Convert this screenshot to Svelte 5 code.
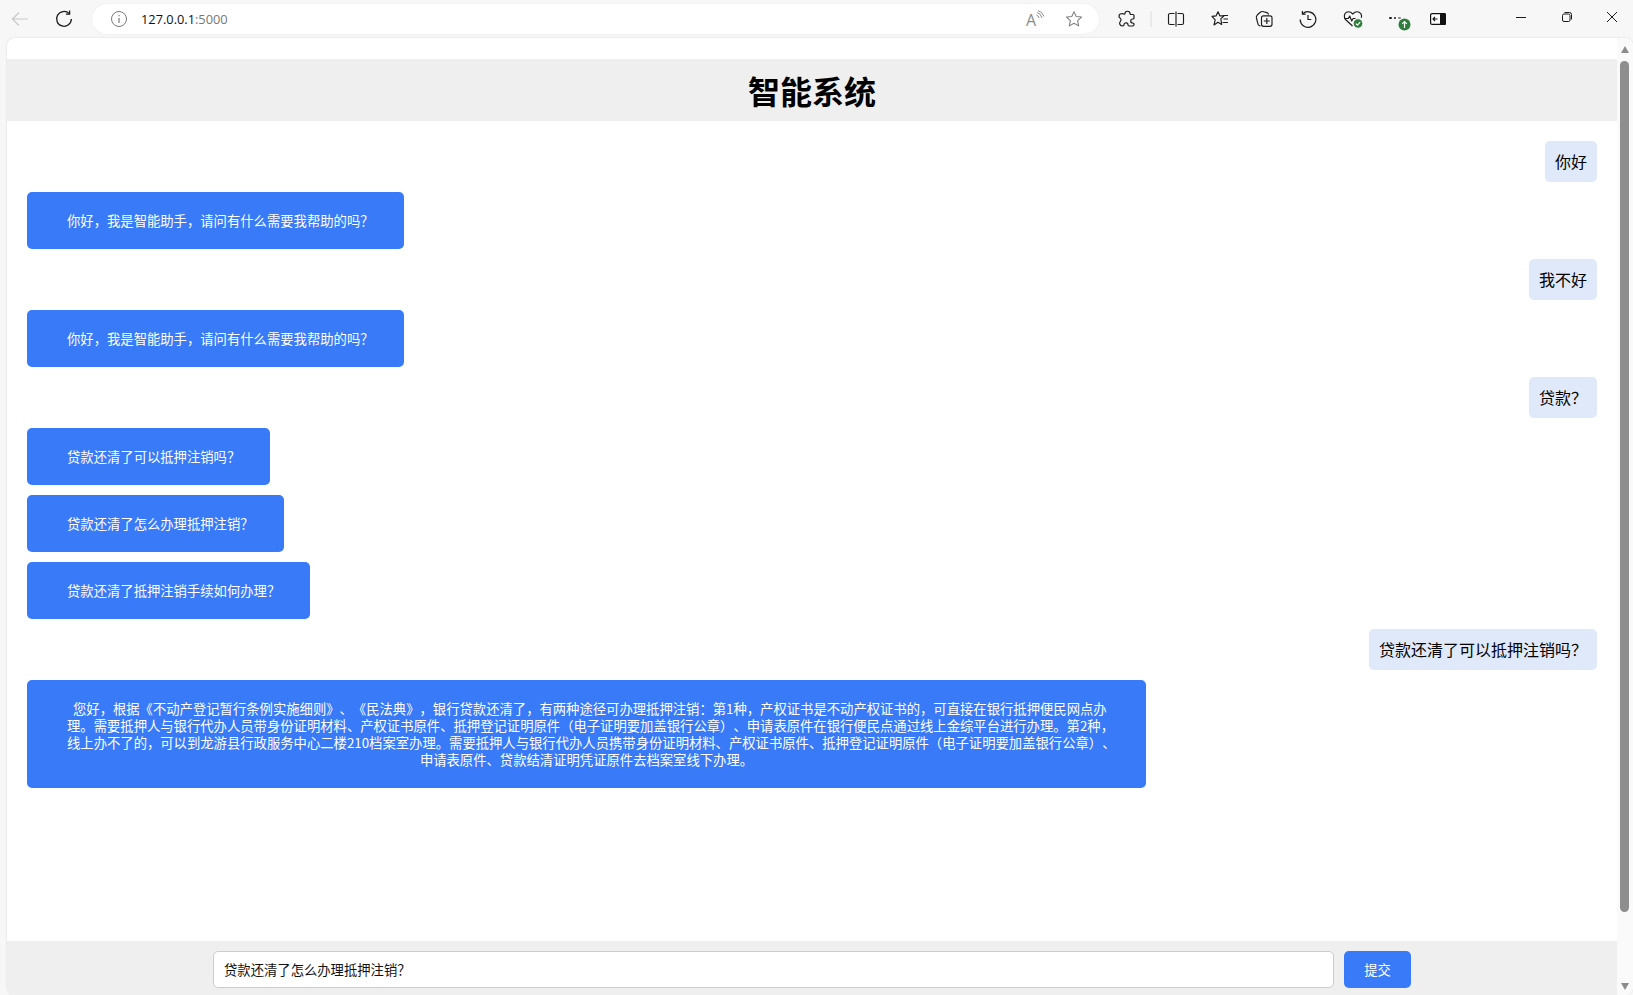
<script>
  const C = '\uff0c';
  const Q = '\uff1f';
  const L = '\uff08';
  const R = '\uff09';
  const M = '\uff1a';
  const greeting = `你好${C}我是智能助手${C}请问有什么需要我帮助的吗${Q}`;
  const typed = `贷款还清了怎么办理抵押注销${Q}`;
  const messages = [
    { from: 'user', lines: ['你好'] },
    { from: 'bot', lines: [greeting] },
    { from: 'user', lines: ['我不好'] },
    { from: 'bot', lines: [greeting] },
    { from: 'user', lines: [`贷款${Q}`] },
    { from: 'bot', lines: [`贷款还清了可以抵押注销吗${Q}`] },
    { from: 'bot', lines: [typed] },
    { from: 'bot', lines: [`贷款还清了抵押注销手续如何办理${Q}`] },
    { from: 'user', lines: [`贷款还清了可以抵押注销吗${Q}`] },
    {
      from: 'bot',
      wide: true,
      lines: [
        `\u00a0\u00a0您好${C}根据《不动产登记暂行条例实施细则》、《民法典》${C}银行贷款还清了${C}有两种途径可办理抵押注销${M}第1种${C}产权证书是不动产权证书的${C}可直接在银行抵押便民网点办`,
        `理。需要抵押人与银行代办人员带身份证明材料、产权证书原件、抵押登记证明原件${L}电子证明要加盖银行公章${R}、申请表原件在银行便民点通过线上金综平台进行办理。第2种${C}`,
        `线上办不了的${C}可以到龙游县行政服务中心二楼210档案室办理。需要抵押人与银行代办人员携带身份证明材料、产权证书原件、抵押登记证明原件${L}电子证明要加盖银行公章${R}、`,
        '申请表原件、贷款结清证明凭证原件去档案室线下办理。'
      ]
    }
  ];
</script>

<div class="window">
  <div class="toolbar">
    <div class="ic back">
      <svg width="20" height="20" viewBox="0 0 20 20" fill="none" stroke="#c9c9c9" stroke-width="1.2"><path d="M18 10H2.500M9 3.500 2.500 10 9 16.500"/></svg>
    </div>
    <div class="ic reload">
      <svg width="20" height="20" viewBox="0 0 20 20" fill="none" stroke="#1c1c1c" stroke-width="1.3"><path d="M15.200 4.600A7.400 7.400 0 1 0 17.400 10"/><path d="M15.600 1.500v3.700h-3.700"/></svg>
    </div>
    <div class="pill">
      <svg class="info" width="18" height="18" viewBox="0 0 18 18" fill="none" stroke="#7a7a7a" stroke-width="1"><circle cx="9" cy="9" r="7.500"/><path d="M9 8v5M9 5v1.300" stroke-width="1.200"/></svg>
      <span class="url">127.0.0.1<span class="port">:5000</span></span>
      <span class="pill-space"></span>
      <span class="read"><span class="read-a">A</span><svg width="9" height="11" viewBox="0 0 9 11" fill="none" stroke="#8c8c8c" stroke-width="1"><path d="M.5 5q2 .6 2.500 3M1 2.500q4 1 5 5.500M2 .5q4.500 1.500 6 6"/></svg></span>
      <svg class="fav" width="18" height="18" viewBox="0 0 18 18" fill="none" stroke="#7d7d7d" stroke-width="1.050" stroke-linejoin="round"><path d="M9 1.600l2.200 4.900 5.300.6-3.900 3.600 1.100 5.200L9 13.300l-4.700 2.600 1.100-5.200-3.900-3.600 5.300-.6z"/></svg>
    </div>

    <div class="ic first">
      <svg width="18" height="18" viewBox="0 0 18 18" fill="none" stroke="#1c1c1c" stroke-width="1.200" stroke-linejoin="round"><path d="M7 3.500c0-3 5-3 5 0 0 .7 0 1 .8 1H15c.8 0 1 .5 1 1.200V8c0 .7-.6 1-1.200 1-2.800 0-2.800 4 0 4 .6 0 1.200.3 1.200 1v.5c0 .8-.4 1.500-1.200 1.500H11c-.8 0-1-.5-1-1.200 0-2.500-4-2.500-4 0 0 .7-.4 1.200-1 1.200-3 0-4-2.500-3-4 .6-.9 1-1 1-2.500 0-1.200-2-1.700-2-3.300 0-2 2-2.700 3.500-2.700C6 4.500 7 4.300 7 3.500z"/></svg>
    </div>
    <div class="sep"></div>
    <div class="ic">
      <svg width="18" height="18" viewBox="0 0 18 18" fill="none" stroke="#1c1c1c" stroke-width="1.150"><path d="M7.500 3.500H3A1.500 1.500 0 0 0 1.500 5v8A1.500 1.500 0 0 0 3 14.500h4.500M10.500 3.500H15A1.500 1.500 0 0 1 16.500 5v8a1.500 1.500 0 0 1-1.500 1.500h-4.500M9 1.500v15"/></svg>
    </div>
    <div class="ic">
      <svg width="18" height="18" viewBox="0 0 18 18" fill="none" stroke="#1c1c1c" stroke-width="1.150" stroke-linejoin="round"><path d="M7 1.800l1.800 4H13l-3.200 3 .9 5.700L7 12.300l-4 2.700 1.200-5.200L1 6.400l4-.5z"/><path d="M12 5.500h5M12.500 9h4.500M11.500 12.500H17"/></svg>
    </div>
    <div class="ic">
      <svg width="18" height="18" viewBox="0 0 18 18" fill="none" stroke="#1c1c1c" stroke-width="1.150" stroke-linejoin="round"><path d="M5.500 16c-1.500 0-2-.8-2.500-1.800L1.400 8c-.3-1.300.1-2.200 1-3.200L5 2.500C6 1.500 7 1.300 8.500 1.700l3.500.9c.9.3 1.400.8 1.500 2"/><rect x="6.500" y="5.800" width="10.500" height="10.500" rx="2"/><path d="M11.800 8v6M8.800 11h6"/></svg>
    </div>
    <div class="ic">
      <svg width="18" height="18" viewBox="0 0 18 18" fill="none" stroke="#1c1c1c" stroke-width="1.200"><path d="M3.600 3.900A7.800 7.800 0 1 1 1.200 9.500"/><path d="M3.400.9v3.300h3.300M9 5v4.500h3.300"/></svg>
    </div>
    <div class="ic badge-host">
      <svg width="20" height="20" viewBox="0 0 20 20" fill="none" stroke="#1c1c1c" stroke-width="1.150" stroke-linejoin="round"><path d="M9.500 17 3 11C.5 8.500 1 4.500 3.500 3.300 5.500 2.300 8 3 9.800 5c1.800-2 4.300-2.700 6.300-1.700 2 1 2.900 3.300 2.100 5.500"/><path d="M1.500 9.500h3.800l1.400-2.500 2 5 1.400-2.500h2.400"/><circle cx="15" cy="14.500" r="4.700" fill="#2f7d3d" stroke="#f7f7f7" stroke-width="0.800"/><path d="M12.900 14.600l1.500 1.500 2.800-3" stroke="#fff" stroke-width="1.200"/></svg>
    </div>
    <div class="ic more">
      <span class="dot"></span><span class="dot"></span><span class="dot faded"></span>
      <svg class="up" width="13" height="13" viewBox="0 0 13 13"><circle cx="6.500" cy="6.500" r="6" fill="#2f7d3d"/><path d="M6.500 10V3.500M4.200 5.800l2.300-2.300 2.300 2.300" fill="none" stroke="#fff" stroke-width="1.200"/></svg>
    </div>
    <div class="ic side">
      <svg width="16" height="12" viewBox="0 0 16 12"><rect x="0.600" y="0.600" width="14.800" height="10.800" rx="1.500" fill="#fff" stroke="#111" stroke-width="1.200"/><path d="M10 0h4.500A1.500 1.500 0 0 1 16 1.500v9a1.500 1.500 0 0 1-1.500 1.500H10z" fill="#111"/><path d="M7.500 6H3M5 4 3 6l2 2" fill="none" stroke="#111" stroke-width="1.100"/></svg>
    </div>

    <div class="grow"></div>

    <div class="win">
      <svg width="12" height="12" viewBox="0 0 12 12" stroke="#1c1c1c" fill="none"><path d="M1 6.500h10"/></svg>
    </div>
    <div class="win">
      <svg width="12" height="12" viewBox="0 0 12 12" stroke="#1c1c1c" fill="none"><rect x="1.500" y="3" width="7.500" height="7.500" rx="1.500"/><path d="M3.500 1.500h5a2 2 0 0 1 2 2v5"/></svg>
    </div>
    <div class="win close">
      <svg width="12" height="12" viewBox="0 0 12 12" stroke="#1c1c1c" fill="none"><path d="M1 1l10 10M11 1 1 11"/></svg>
    </div>
  </div>

  <div class="viewport">
    <div class="page">
      <header class="header"><h1>智能系统</h1></header>

      <main class="chat">
        {#each messages as m}
          {#if m.from === 'user'}
            <div class="user">{m.lines[0]}</div>
          {:else}
            <div class="bot" class:wide={m.wide}>
              {#each m.lines as l}<span class="line">{l}</span>{/each}
            </div>
          {/if}
        {/each}
      </main>

      <footer class="footer">
        <div class="form">
          <div class="input">{typed}</div>
          <div class="submit">提交</div>
        </div>
      </footer>
    </div>

    <div class="scrollbar">
      <div class="arrow up-arrow"></div>
      <div class="thumb"></div>
      <div class="arrow down-arrow"></div>
    </div>
  </div>
</div>

<style>
  :global(body) {
    margin: 0;
    overflow: hidden;
  }
  .window {
    height: 995px;
    display: flex;
    flex-direction: column;
    background: #f7f7f7;
    font-family: "Noto Sans CJK SC", "Liberation Sans", sans-serif;
    text-spacing-trim: space-all;
    overflow: hidden;
  }
  .toolbar {
    height: 38px;
    flex: none;
    display: flex;
    align-items: center;
  }
  .ic {
    width: 44px;
    height: 38px;
    flex: none;
    display: flex;
    align-items: center;
    justify-content: center;
  }
  .back { width: 40px; }
  .reload { width: 48px; }
  .first { margin-left: 6px; }
  .pill {
    width: 1007px;
    height: 30px;
    margin-left: 4px;
    border-radius: 15px;
    background: #fff;
    box-shadow: 0 0 2px rgba(0, 0, 0, 0.08);
    display: flex;
    align-items: center;
    padding-left: 18px;
    padding-right: 16px;
    box-sizing: border-box;
  }
  .info { flex: none; }
  .url {
    margin-left: 13px;
    font-family: "Open Sans", sans-serif;
    font-size: 12.800px;
    color: #111;
  }
  .port { color: #777; }
  .pill-space { flex: 1; }
  .read {
    display: flex;
    align-items: flex-start;
    margin-right: 20px;
    height: 18px;
  }
  .read-a {
    font-family: "Open Sans", sans-serif;
    font-size: 16px;
    line-height: 20px;
    color: #8c8c8c;
  }
  .sep {
    width: 2px;
    height: 16px;
    background: #dcdcdc;
    flex: none;
    margin: 0 2px 0 1px;
    transform: scaleX(0.5);
  }
  .badge-host { padding-left: 2px; box-sizing: border-box; }
  .more {
    position: relative;
    gap: 2px;
    justify-content: flex-start;
    padding-left: 15px;
    box-sizing: border-box;
  }
  .dot {
    width: 2.500px;
    height: 2.500px;
    background: #1c1c1c;
    border-radius: 50%;
    margin-top: -2px;
  }
  .dot.faded { background: #888; }
  .up {
    position: absolute;
    left: 24px;
    top: 18px;
  }
  .side { width: 40px; }
  .grow { flex: 1; }
  .win {
    width: 46px;
    height: 38px;
    flex: none;
    display: flex;
    align-items: center;
    justify-content: center;
    padding-bottom: 4px;
    box-sizing: border-box;
  }
  .close { width: 43px; }

  .viewport {
    flex: 1;
    min-height: 0;
    margin-left: 7px;
    display: flex;
    background: #fff;
    border-radius: 8px;
    box-shadow: 0 0 2px rgba(0, 0, 0, 0.15);
    overflow: hidden;
  }
  .page {
    flex: 1;
    min-width: 0;
    display: flex;
    flex-direction: column;
    padding-top: 21px;
  }
  .header {
    height: 62px;
    flex: none;
    background: #efefef;
    display: flex;
    align-items: center;
    justify-content: center;
  }
  h1 {
    margin: 0;
    font-size: 32px;
    font-weight: 700;
    line-height: 40px;
    color: #000;
  }
  .chat {
    flex: 1;
    min-height: 0;
    display: flex;
    flex-direction: column;
    align-items: flex-start;
    gap: 10px;
    padding: 20px;
  }
  .user {
    align-self: flex-end;
    background: #dfe9fa;
    color: #000;
    font-size: 16px;
    line-height: 21px;
    padding: 10px;
    border-radius: 5px;
  }
  .bot {
    background: #387af8;
    color: #fff;
    font-size: 13.333px;
    line-height: 17px;
    padding: 20px 30px 20px 40px;
    border-radius: 5px;
    text-align: center;
    box-sizing: border-box;
  }
  .bot.wide {
    width: 1119px;
    padding: 20px 40px;
  }
  .line {
    display: block;
    white-space: nowrap;
  }
  .footer {
    flex: none;
    background: #efefef;
    padding: 10px 0 7px;
    display: flex;
    justify-content: center;
  }
  .form {
    width: 1198px;
    display: flex;
    gap: 10px;
  }
  .input {
    flex: 1;
    height: 37px;
    box-sizing: border-box;
    background: #fff;
    border: 1px solid #ccc;
    border-radius: 5px;
    padding: 0 10px;
    font-size: 13.333px;
    line-height: 35px;
    color: #111;
  }
  .submit {
    width: 67px;
    height: 37px;
    background: #387af8;
    color: #fff;
    border-radius: 5px;
    font-size: 13.333px;
    line-height: 37px;
    text-align: center;
  }
  .scrollbar {
    width: 16px;
    flex: none;
    background: #fafafa;
    display: flex;
    flex-direction: column;
    align-items: center;
    padding: 8px 1px 5px 0;
    box-sizing: border-box;
  }
  .arrow {
    width: 0;
    height: 0;
    flex: none;
    border-left: 4.500px solid transparent;
    border-right: 4.500px solid transparent;
  }
  .up-arrow { border-bottom: 7px solid #8c8c8c; }
  .down-arrow { border-top: 7px solid #8c8c8c; margin-top: 71px; }
  .thumb {
    flex: 1;
    width: 9px;
    margin-top: 8px;
    background: #8e8e8e;
    border-radius: 5px;
  }
</style>
